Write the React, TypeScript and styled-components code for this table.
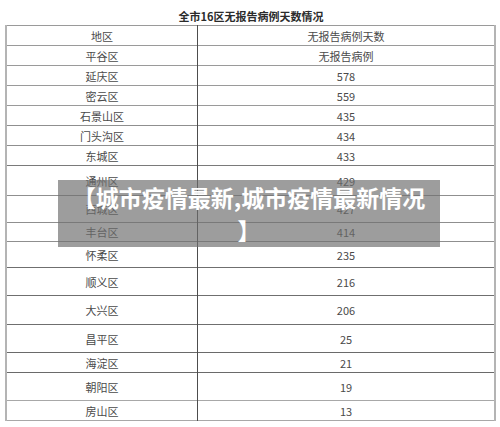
import React from "react";
import styled, { createGlobalStyle } from "styled-components";

const GlobalStyle = createGlobalStyle`
  html, body {
    margin: 0;
    padding: 0;
    background: #ffffff;
    font-family: "Noto Sans CJK SC", "Noto Sans", sans-serif;
  }
`;

const Page = styled.div`
  position: relative;
  width: 500px;
  height: 427px;
  overflow: hidden;
  background: #ffffff;
`;

const Title = styled.div`
  height: 25px;
  box-sizing: border-box;
  padding-top: 8px;
  line-height: 16px;
  font-size: 11px;
  font-weight: 700;
  color: #2b2b2b;
  text-align: center;
  padding-left: 2px;
`;

const Table = styled.table`
  margin-left: 5px;
  width: 491px;
  border-collapse: collapse;
  table-layout: fixed;
  border-left: 2px solid #b4b4b4;
  border-right: 2px solid #b4b4b4;
  border-top: 1px solid #9a9a9a;
`;

const Row = styled.tr<{ $h: number; $line: string }>`
  height: ${(p) => p.$h}px;
  border-bottom: 1px solid ${(p) => p.$line};
`;

const Cell = styled.td<{ $first?: boolean }>`
  padding: 0;
  font-size: 11px;
  line-height: 14px;
  color: #4a4a4a;
  text-align: center;
  vertical-align: middle;
  border-right: ${(p) => (p.$first ? "1px solid #4d4d4d" : "none")};
  width: ${(p) => (p.$first ? "190px" : "auto")};
`;

const Banner = styled.div`
  position: absolute;
  left: 58px;
  top: 180px;
  width: 382px;
  height: 67px;
  box-sizing: border-box;
  padding: 1px 12px 0;
  background: rgba(110, 110, 110, 0.68);
  color: #ffffff;
  font-size: 23px;
  font-weight: 700;
  line-height: 33px;
  text-align: center;
  word-break: break-all;
  line-break: anywhere;
`;

type RowData = { name: string; value: string; h: number; line: string };

const rows: RowData[] = [
  { name: "地区", value: "无报告病例天数", h: 20, line: "#9a9a9a" },
  { name: "平谷区", value: "无报告病例", h: 20, line: "#9a9a9a" },
  { name: "延庆区", value: "578", h: 20, line: "#9a9a9a" },
  { name: "密云区", value: "559", h: 20, line: "#9a9a9a" },
  { name: "石景山区", value: "435", h: 20, line: "#8f8f8f" },
  { name: "门头沟区", value: "434", h: 20, line: "#8f8f8f" },
  { name: "东城区", value: "433", h: 20, line: "#7a7a7a" },
  { name: "通州区", value: "429", h: 30, line: "#8f8f8f" },
  { name: "西城区", value: "427", h: 27, line: "#8f8f8f" },
  { name: "丰台区", value: "414", h: 19, line: "#8f8f8f" },
  { name: "怀柔区", value: "235", h: 26, line: "#6f6f6f" },
  { name: "顺义区", value: "216", h: 28, line: "#6f6f6f" },
  { name: "大兴区", value: "206", h: 29, line: "#6f6f6f" },
  { name: "昌平区", value: "25", h: 28, line: "#6a6a6a" },
  { name: "海淀区", value: "21", h: 20, line: "#6a6a6a" },
  { name: "朝阳区", value: "19", h: 28, line: "#a8a8a8" },
  { name: "房山区", value: "13", h: 20, line: "#a8a8a8" },
];

export default function App() {
  return (
    <Page>
      <GlobalStyle />
      <Title>全市16区无报告病例天数情况</Title>
      <Table>
        <tbody>
          {rows.map((r) => (
            <Row key={r.name} $h={r.h} $line={r.line}>
              <Cell $first>{r.name}</Cell>
              <Cell>{r.value}</Cell>
            </Row>
          ))}
        </tbody>
      </Table>
      <Banner>【城市疫情最新,城市疫情最新情况】</Banner>
    </Page>
  );
}
